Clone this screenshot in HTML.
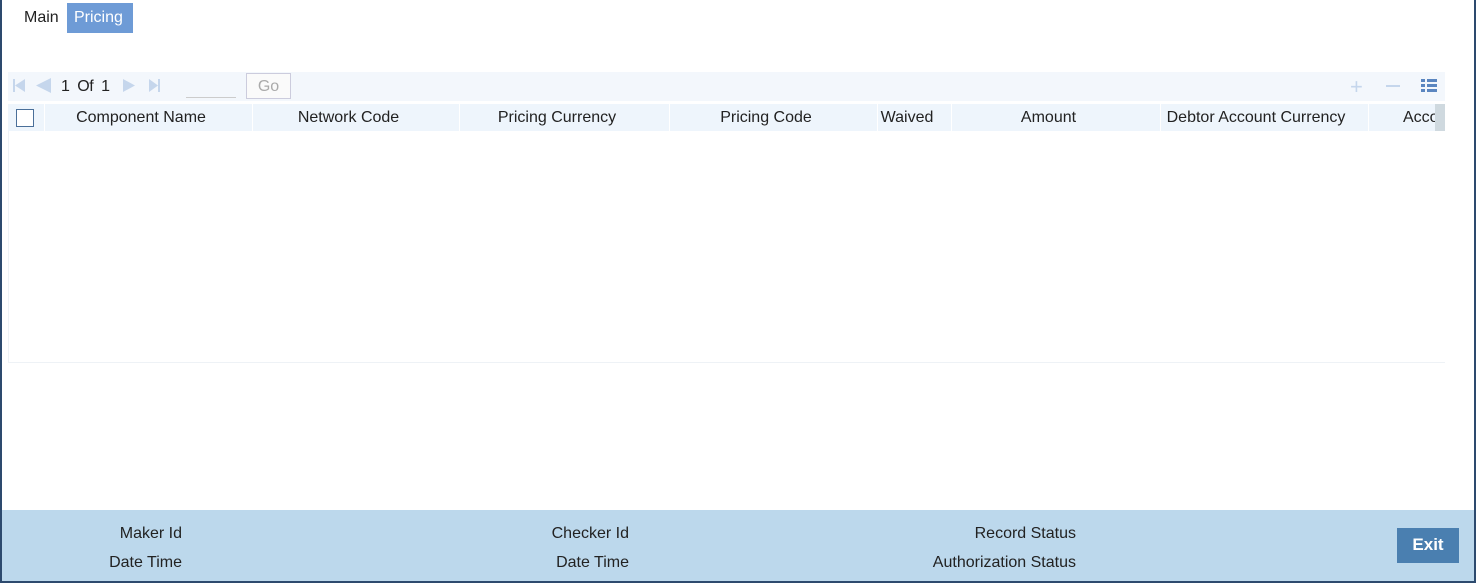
<!DOCTYPE html>
<html><head><style>
*{margin:0;padding:0;box-sizing:border-box}
body{width:1477px;height:585px;background:#fff;font-family:"Liberation Sans",Arial,sans-serif;font-size:16px;color:#222;position:relative;overflow:hidden}
.frame{position:absolute;left:0;top:0;width:1476px;height:583px;border-left:2px solid #2d4a6e;border-right:2px solid #2d4a6e;border-bottom:2px solid #2d4a6e}
.abs{position:absolute}
.tab{position:absolute;top:3px;height:30px;line-height:30px;padding:0 7px}
.hdr{position:absolute;top:104px;height:27px;background:#eef5fc;line-height:28px;text-align:center;padding-right:14px}
.div{position:absolute;top:104px;width:1px;height:27px;background:#fff}
.ft{position:absolute;font-size:16px;text-align:right}
</style></head><body>
<div class="frame"></div>
<div class="tab" style="left:17px;color:#222">Main</div>
<div class="tab" style="left:67px;background:#6e9bd6;color:#fff;width:66px">Pricing</div>

<div class="abs" style="left:8px;top:72px;width:1437px;height:29px;background:#f3f7fc"></div>
<svg class="abs" style="left:12px;top:78px" width="160" height="16">
<rect x="1" y="1" width="2" height="13" fill="#c5d6ec"/><polygon points="3,7.5 13,1 13,14" fill="#c5d6ec"/>
<polygon points="24,7.5 39,0 39,15" fill="#c5d6ec"/>
<polygon points="111,1 123,7.5 111,14" fill="#c5d6ec"/>
<polygon points="137,1 146,7.5 137,14" fill="#c5d6ec"/><rect x="146" y="1" width="2" height="13" fill="#c5d6ec"/>
</svg>
<div class="abs" style="left:61px;top:78px;font-size:16px;letter-spacing:-0.5px">1&nbsp;&nbsp;Of&nbsp;&nbsp;1</div>
<div class="abs" style="left:186px;top:97px;width:50px;height:1px;background:#ccc"></div>
<div class="abs" style="left:246px;top:73px;width:45px;height:26px;border:1px solid #ccd;color:#aaa;text-align:center;line-height:26px;background:#fafafa">Go</div>
<div class="abs" style="left:1350px;top:74px;color:#c5d6ec;font-size:22px">+</div>
<div class="abs" style="left:1386px;top:85px;width:14px;height:2px;background:#c5d6ec"></div>
<svg class="abs" style="left:1421px;top:78px" width="17" height="15">
<rect x="0" y="1" width="4" height="3" fill="#5b86c0"/><rect x="6" y="1" width="10" height="3" fill="#5b86c0"/>
<rect x="0" y="6" width="4" height="3" fill="#5b86c0"/><rect x="6" y="6" width="10" height="3" fill="#5b86c0"/>
<rect x="0" y="11" width="4" height="3" fill="#5b86c0"/><rect x="6" y="11" width="10" height="3" fill="#5b86c0"/>
</svg>

<div class="hdr" style="left:8px;width:1427px"></div>
<div class="abs" style="left:16px;top:109px;width:18px;height:18px;border:1px solid #4a6f99;background:#fff"></div>
<div class="div" style="left:44px"></div>
<div class="hdr" style="left:44px;width:208px;background:none">Component Name</div>
<div class="div" style="left:252px"></div>
<div class="hdr" style="left:252px;width:207px;background:none">Network Code</div>
<div class="div" style="left:459px"></div>
<div class="hdr" style="left:459px;width:210px;background:none">Pricing Currency</div>
<div class="div" style="left:669px"></div>
<div class="hdr" style="left:669px;width:208px;background:none">Pricing Code</div>
<div class="div" style="left:877px"></div>
<div class="hdr" style="left:877px;width:60px;background:none;padding:0">Waived</div>
<div class="div" style="left:951px"></div>
<div class="hdr" style="left:951px;width:209px;background:none">Amount</div>
<div class="div" style="left:1160px"></div>
<div class="hdr" style="left:1160px;width:208px;background:none;padding-right:16px">Debtor Account Currency</div>
<div class="div" style="left:1368px"></div>
<div class="hdr" style="left:1403px;width:32px;background:none;text-align:left;overflow:hidden;white-space:nowrap;padding:0">Account</div>
<div class="abs" style="left:1435px;top:104px;width:10px;height:27px;background:#cfd9df"></div>
<div class="abs" style="left:8px;top:131px;width:1px;height:232px;background:#eef2f6"></div>
<div class="abs" style="left:8px;top:362px;width:1437px;height:1px;background:#eef2f6"></div>

<div class="abs" style="left:2px;top:510px;width:1472px;height:71px;background:#bcd8ec"></div>
<div class="ft" style="left:60px;width:122px;top:525px">Maker Id</div>
<div class="ft" style="left:60px;width:122px;top:554px">Date Time</div>
<div class="ft" style="left:480px;width:149px;top:525px">Checker Id</div>
<div class="ft" style="left:480px;width:149px;top:554px">Date Time</div>
<div class="ft" style="left:876px;width:200px;top:525px">Record Status</div>
<div class="ft" style="left:876px;width:200px;top:554px">Authorization Status</div>
<div class="abs" style="left:1397px;top:528px;width:62px;height:35px;background:#4a7fb0;color:#fff;font-weight:bold;text-align:center;line-height:33px;font-size:17px">Exit</div>
</body></html>
